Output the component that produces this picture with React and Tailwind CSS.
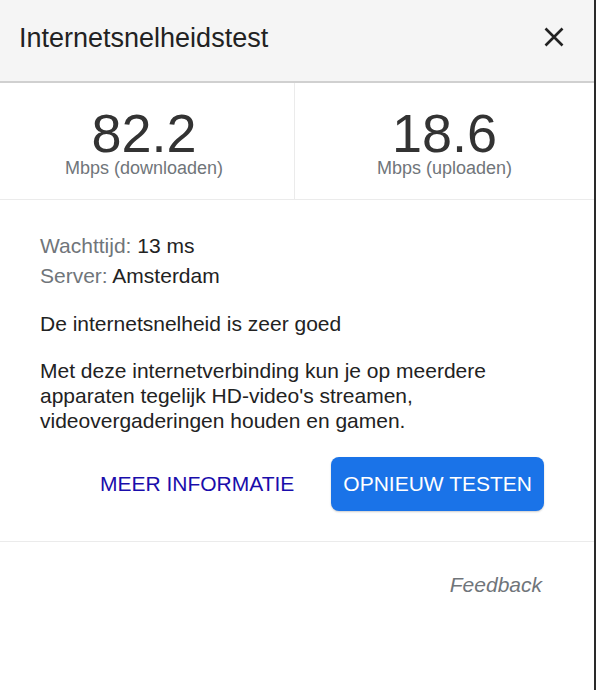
export default function App() {
  return (
    <div className="flex h-[690px] w-[596px] bg-white font-['Liberation_Sans',Arial,sans-serif]">
      <div className="flex-1 flex flex-col">
        {/* Header */}
        <div className="h-[83px] flex items-start justify-between bg-[#f5f5f5] border-b-2 border-[#d0d0d0] pl-[19px] pr-[30px]">
          <h1 className="mt-[25px] text-[27px] leading-[27px] text-[#222]">Internetsnelheidstest</h1>
          <svg width="20" height="20" viewBox="0 0 20 20" className="mt-[27px] text-[#222]">
            <path d="M1.5 1.5 L18.5 18.5 M18.5 1.5 L1.5 18.5" stroke="currentColor" strokeWidth="2.6" fill="none" />
          </svg>
        </div>

        {/* Stats */}
        <div className="grid grid-cols-[295px_1fr] h-[117px] border-b border-[#ebebeb]">
          {[
            { value: '82.2', label: 'Mbps (downloaden)' },
            { value: '18.6', label: 'Mbps (uploaden)' },
          ].map((s, i) => (
            <div key={s.label}
              className={`flex flex-col items-center pt-[25px] ${i === 0 ? 'border-r border-[#ebebeb] pr-[6px]' : ''}`}>
              <div className="text-[54px] leading-[50px] text-[#333]">{s.value}</div>
              <div className="text-[18px] leading-[20px] text-[#70757a]">{s.label}</div>
            </div>
          ))}
        </div>

        {/* Details */}
        <div className="px-[40px] pt-[31px] text-[21px] text-[#222]">
          <div className="leading-[30px]">
            <div><span className="text-[#70757a]">Wachttijd:</span> 13 ms</div>
            <div><span className="text-[#70757a]">Server:</span> Amsterdam</div>
          </div>
          <p className="mt-[20px] leading-[25px]">De internetsnelheid is zeer goed</p>
          <p className="mt-[22px] leading-[25px]">
            Met deze internetverbinding kun je op meerdere apparaten tegelijk HD-video's streamen,
            videovergaderingen houden en gamen.
          </p>
        </div>

        {/* Actions */}
        <div className="flex items-center justify-end gap-[37px] pr-[50px] mt-[24px] pb-[30px] border-b border-[#ebebeb]">
          <button className="text-[21px] text-[#1a0dab]">MEER INFORMATIE</button>
          <button className="h-[54px] px-[12px] rounded-[8px] bg-[#1a73e8] text-white text-[21px] shadow-[0_1px_2px_rgba(0,0,0,0.2)]">
            OPNIEUW TESTEN
          </button>
        </div>

        <div className="flex justify-end pr-[52px] pt-[30px]">
          <span className="text-[21px] leading-[26px] italic text-[#70757a]">Feedback</span>
        </div>
      </div>
      <div className="w-[2px] bg-[#2a2a2a]" />
    </div>
  )
}
